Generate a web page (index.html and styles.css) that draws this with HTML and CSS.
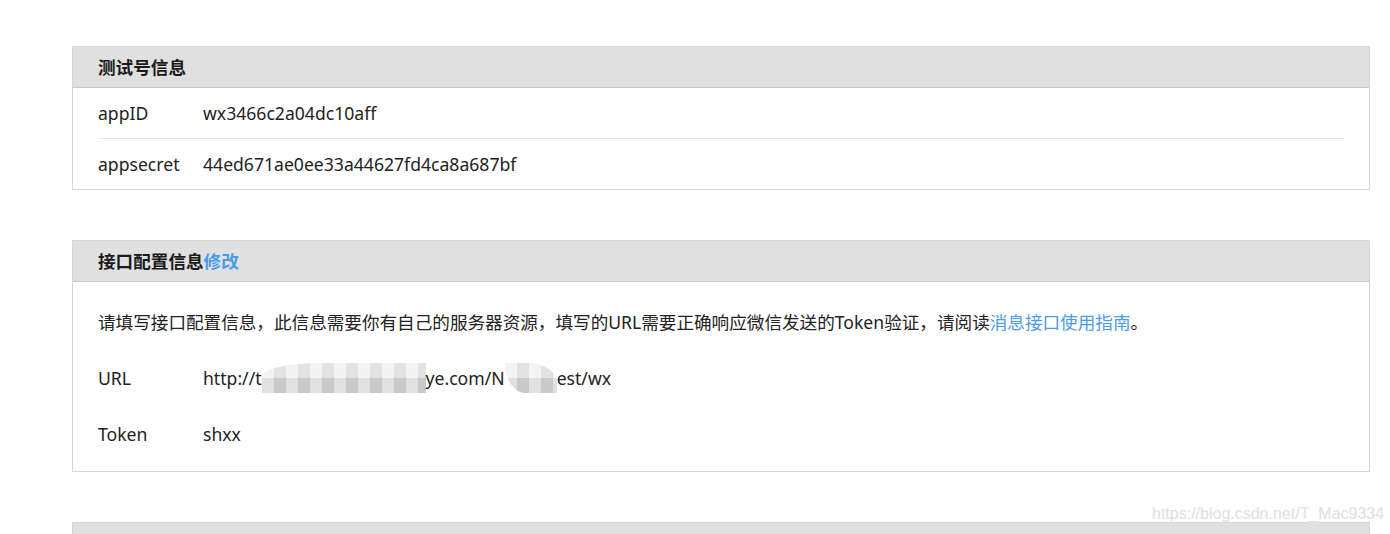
FILE: index.html
```html
<!DOCTYPE html>
<html lang="zh-CN">
<head>
<meta charset="utf-8">
<title>测试号管理</title>
<link rel="stylesheet" href="styles.css">
</head>
<body>
<main class="page">
  <section class="panel">
    <header class="panel-hd">测试号信息</header>
    <div class="panel-bd rows">
      <div class="row"><span class="label">appID</span><span class="value">wx3466c2a04dc10aff</span></div>
      <div class="row"><span class="label">appsecret</span><span class="value">44ed671ae0ee33a44627fd4ca8a687bf</span></div>
    </div>
  </section>

  <section class="panel">
    <header class="panel-hd">接口配置信息<a class="link" href="#">修改</a></header>
    <div class="panel-bd config">
      <p class="desc">请填写接口配置信息，此信息需要你有自己的服务器资源，填写的URL需要正确响应微信发送的Token验证，请阅读<a class="link" href="#">消息接口使用指南</a>。</p>
      <div class="row plain"><span class="label">URL</span><span class="value">http://t<span class="mosaic m1"></span>ye.com/N<span class="mosaic m2"></span>est/wx</span></div>
      <div class="row plain"><span class="label">Token</span><span class="value">shxx</span></div>
    </div>
  </section>

  <section class="panel">
    <header class="panel-hd">&nbsp;</header>
  </section>
</main>
<div class="watermark">https://blog.csdn.net/T_Mac9334</div>
</body>
</html>
```
FILE: styles.css
```css
html, body {
  margin: 0;
  padding: 0;
  background: #fff;
  height: 534px;
  overflow: hidden;
}
body {
  font-family: "Noto Sans", "Noto Sans CJK SC", sans-serif;
  font-size: 17.6px;
  color: #222;
  position: relative;
}
.page {
  width: 1298px;
  margin-left: 72px;
  padding-top: 46px;
  display: flex;
  flex-direction: column;
  gap: 50px;
}
.panel {
  border: 1px solid #d6d6d6;
  background: #fff;
}
.panel-hd {
  height: 40px;
  line-height: 40px;
  background: #e0e0e0;
  border-bottom: 1px solid #c9c9c9;
  padding-left: 25px;
  font-weight: bold;
  color: #1a1a1a;
}
.link {
  color: #4a9be8;
  text-decoration: none;
}
.panel-bd {
  padding: 0 25px;
}
.row {
  display: flex;
  align-items: center;
  height: 50px;
}
.rows .row + .row {
  border-top: 1px solid #e5e5e5;
}
.label {
  width: 105px;
  flex: none;
}
.value {
  display: flex;
  align-items: center;
  white-space: nowrap;
}
.config {
  padding-top: 12px;
  padding-bottom: 9px;
}
.desc {
  margin: 0;
  height: 56px;
  line-height: 56px;
  white-space: nowrap;
}
.row.plain {
  height: 56px;
}
.mosaic {
  display: inline-block;
  height: 30px;
  background-color: #d8d8d8;
  background-image:
    linear-gradient(90deg, rgba(255,255,255,0.35) 50%, rgba(0,0,0,0.04) 50%),
    linear-gradient(180deg, rgba(255,255,255,0.5) 50%, rgba(0,0,0,0.03) 50%);
  background-size: 24px 30px, 24px 30px;
}
.m1 {
  width: 164px;
  border-top-left-radius: 60px 14px;
}
.m2 {
  width: 52px;
  border-top-right-radius: 30px 20px;
  border-bottom-left-radius: 20px 30px;
}
.watermark {
  position: absolute;
  left: 1152px;
  top: 505px;
  font-family: "Liberation Sans", Arial, sans-serif;
  font-size: 16px;
  color: #e2e2e2;
  text-shadow: 0 0 1px #f4f4f4;
}
```
